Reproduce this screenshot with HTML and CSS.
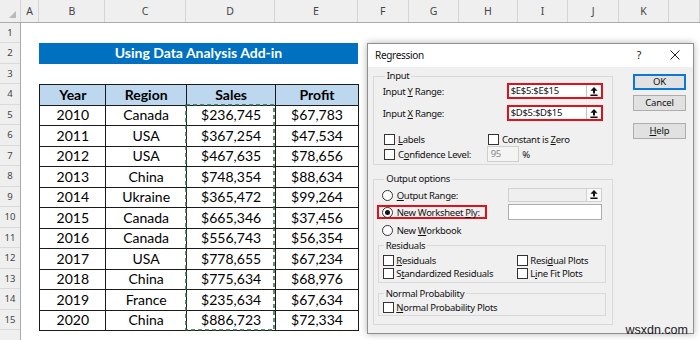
FILE: index.html
```html
<!DOCTYPE html>
<html lang="en">
<head>
  <meta charset="UTF-8">
  <title>Regression - Data Analysis Add-in</title>
  <link rel="stylesheet" href="styles.css">
</head>
<body>
  <div class="sheet">
    <div class="col-heads">
      <div class="corner"><span class="corner-mark"></span></div>
      <div class="ch">A</div>
      <div class="ch">B</div>
      <div class="ch">C</div>
      <div class="ch">D</div>
      <div class="ch">E</div>
      <div class="ch">F</div>
      <div class="ch">G</div>
      <div class="ch">H</div>
      <div class="ch">I</div>
      <div class="ch">J</div>
      <div class="ch">K</div>
      <div class="ch"></div>
    </div>

    <div class="sheet-body">
      <div class="row-heads">
        <div class="rh">1</div>
        <div class="rh">2</div>
        <div class="rh">3</div>
        <div class="rh">4</div>
        <div class="rh">5</div>
        <div class="rh">6</div>
        <div class="rh">7</div>
        <div class="rh">8</div>
        <div class="rh">9</div>
        <div class="rh">10</div>
        <div class="rh">11</div>
        <div class="rh">12</div>
        <div class="rh">13</div>
        <div class="rh">14</div>
        <div class="rh">15</div>
        <div class="rh"></div>
      </div>

      <div class="cells">
        <div class="title">Using Data Analysis Add-in</div>

        <div class="table-wrap">
          <table class="data">
            <colgroup>
              <col class="c-year">
              <col class="c-region">
              <col class="c-sales">
              <col class="c-profit">
            </colgroup>
            <tr class="head">
              <th>Year</th>
              <th>Region</th>
              <th>Sales</th>
              <th>Profit</th>
            </tr>
            <tr><td>2010</td><td>Canada</td><td>$236,745</td><td>$67,783</td></tr>
            <tr><td>2011</td><td>USA</td><td>$367,254</td><td>$47,534</td></tr>
            <tr><td>2012</td><td>USA</td><td>$467,635</td><td>$78,656</td></tr>
            <tr><td>2013</td><td>China</td><td>$748,354</td><td>$88,634</td></tr>
            <tr><td>2014</td><td>Ukraine</td><td>$365,472</td><td>$99,264</td></tr>
            <tr><td>2015</td><td>Canada</td><td>$665,346</td><td>$37,456</td></tr>
            <tr><td>2016</td><td>Canada</td><td>$556,743</td><td>$56,354</td></tr>
            <tr><td>2017</td><td>USA</td><td>$778,655</td><td>$67,234</td></tr>
            <tr><td>2018</td><td>China</td><td>$775,634</td><td>$68,976</td></tr>
            <tr><td>2019</td><td>France</td><td>$235,634</td><td>$67,634</td></tr>
            <tr><td>2020</td><td>China</td><td>$886,723</td><td>$72,334</td></tr>
          </table>

          <!-- copy marquee around D5:D15 -->
          <svg class="marquee" width="90" height="227" viewBox="0 0 90 227">
            <rect x="1" y="1" width="88" height="225" fill="none" stroke="#2a6b45" stroke-width="1.5" stroke-dasharray="4 3"/>
          </svg>
        </div>
      </div>
    </div>
  </div>

  <div class="dialog">
    <div class="dlg-title">
      <span class="dlg-name">Regression</span>
      <span class="dlg-help">?</span>
      <svg class="dlg-close" width="10" height="10" viewBox="0 0 10 10">
        <path d="M0.5 0.5 L9.5 9.5 M9.5 0.5 L0.5 9.5" stroke="#222" stroke-width="1" fill="none"/>
      </svg>
    </div>

    <div class="dlg-body">
      <div class="dlg-main">
        <fieldset class="group input">
          <legend>Input</legend>
          <div class="field-row">
            <span class="field-label">Input <u>Y</u> Range:</span>
            <span class="range hl">
              <span class="range-text">$E$5:$E$15</span>
              <span class="range-btn">
                <svg width="8" height="9" viewBox="0 0 8 9"><path d="M4 0 L7.6 3.8 H5 V6.6 H3 V3.8 H0.4 Z M0.4 7.6 H7.6 V9 H0.4 Z" fill="#111"/></svg>
              </span>
            </span>
          </div>
          <div class="field-row second">
            <span class="field-label">Input <u>X</u> Range:</span>
            <span class="range hl">
              <span class="range-text">$D$5:$D$15</span>
              <span class="range-btn">
                <svg width="8" height="9" viewBox="0 0 8 9"><path d="M4 0 L7.6 3.8 H5 V6.6 H3 V3.8 H0.4 Z M0.4 7.6 H7.6 V9 H0.4 Z" fill="#111"/></svg>
              </span>
            </span>
          </div>
          <div class="check-row labels">
            <span class="opt opt-left"><span class="box"></span><span><u>L</u>abels</span></span>
            <span class="opt"><span class="box"></span><span>Constant is <u>Z</u>ero</span></span>
          </div>
          <div class="check-row conf">
            <span class="opt opt-left"><span class="box"></span><span>C<u>o</u>nfidence Level:</span></span>
            <span class="num">95</span>
            <span class="pct">%</span>
          </div>
        </fieldset>

        <fieldset class="group output">
          <legend>Output options</legend>
          <div class="radio-row first">
            <span class="opt out-label"><span class="radio"></span><span><u>O</u>utput Range:</span></span>
            <span class="range off">
              <span class="range-text"></span>
              <span class="range-btn">
                <svg width="8" height="9" viewBox="0 0 8 9"><path d="M4 0 L7.6 3.8 H5 V6.6 H3 V3.8 H0.4 Z M0.4 7.6 H7.6 V9 H0.4 Z" fill="#111"/></svg>
              </span>
            </span>
          </div>
          <div class="radio-row ply">
            <span class="opt out-label hl-opt"><span class="radio on"></span><span>New Worksheet <u>P</u>ly:</span></span>
            <span class="text-box"></span>
          </div>
          <div class="radio-row book">
            <span class="opt"><span class="radio"></span><span>New <u>W</u>orkbook</span></span>
          </div>

          <fieldset class="group sub resid">
            <legend>Residuals</legend>
            <div class="sub-row">
              <span class="opt res-left"><span class="box"></span><span><u>R</u>esiduals</span></span>
              <span class="opt"><span class="box"></span><span>Resi<u>d</u>ual Plots</span></span>
            </div>
            <div class="sub-row">
              <span class="opt res-left"><span class="box"></span><span>S<u>t</u>andardized Residuals</span></span>
              <span class="opt"><span class="box"></span><span>L<u>i</u>ne Fit Plots</span></span>
            </div>
          </fieldset>

          <fieldset class="group sub normal">
            <legend>Normal Probability</legend>
            <div class="sub-row">
              <span class="opt"><span class="box"></span><span><u>N</u>ormal Probability Plots</span></span>
            </div>
          </fieldset>
        </fieldset>
      </div>

      <div class="dlg-side">
        <button class="btn default">OK</button>
        <button class="btn cancel">Cancel</button>
        <button class="btn help"><u>H</u>elp</button>
      </div>
    </div>
  </div>

  <div class="watermark">wsxdn.com</div>
</body>
</html>
```

FILE: styles.css
```css
* {
  box-sizing: border-box;
}
body {
  margin: 0;
  width: 700px;
  height: 340px;
  overflow: hidden;
  position: relative;
  background: #fff;
  font-family: Lato, "Liberation Sans", sans-serif;
}

/* sheet headers */
.col-heads {
  display: grid;
  grid-template-columns: 21px 18.3px 66px 80.7px 89.3px 82.4px 51px 50.6px 58.4px 50.6px 50.7px 50.3px 1fr;
  height: 22.5px;
  background: #efefef;
  border-bottom: 1px solid #ababab;
}
.corner {
  display: flex;
  align-items: flex-end;
  justify-content: flex-end;
  padding: 0 4px 4px 0;
  border-right: 1px solid #d5d5d5;
}
.corner-mark {
  width: 0;
  height: 0;
  border-left: 7px solid transparent;
  border-bottom: 7px solid #b9b9b9;
}
.ch {
  display: flex;
  align-items: center;
  justify-content: center;
  border-right: 1px solid #d5d5d5;
  font-family: "Noto Sans", sans-serif;
  font-size: 10.5px;
  color: #444;
}
.sheet-body {
  display: flex;
}
.row-heads {
  width: 21px;
  flex: none;
  background: #efefef;
  border-right: 1px solid #ababab;
}
.rh {
  height: 20.5px;
  display: flex;
  align-items: center;
  justify-content: center;
  border-bottom: 1px solid #dadada;
  font-family: "Noto Sans", sans-serif;
  font-size: 9.5px;
  color: #444;
}
.cells {
  flex: 1;
  padding-top: 20.5px;
}

/* sheet content */
.title {
  margin-left: 18.3px;
  width: 318.4px;
  height: 20.6px;
  line-height: 20.6px;
  background: #0070c0;
  color: #fff;
  font-weight: bold;
  font-size: 14px;
  text-align: center;
}
.table-wrap {
  position: relative;
  margin: 20.5px 0 0 18.3px;
  width: 318.4px;
}
.data {
  border-collapse: collapse;
  table-layout: fixed;
  width: 318.4px;
}
.c-year { width: 66px; }
.c-region { width: 80.7px; }
.c-sales { width: 89.3px; }
.c-profit { width: 82.4px; }
.data tr {
  height: 20.5px;
}
.data td,
.data th {
  border: 1px solid #1a1a1a;
  padding: 0;
  text-align: center;
  font-size: 14px;
  line-height: 1;
  color: #000;
}
.data th {
  background: #bdd7ee;
  font-weight: bold;
}
.marquee {
  position: absolute;
  left: 146.2px;
  top: 20.2px;
}

/* dialog */
.dialog {
  position: absolute;
  left: 367px;
  top: 42.5px;
  width: 327px;
  height: 291px;
  display: flex;
  flex-direction: column;
  background: #f0f0f0;
  border: 1px solid #8f8f8f;
  box-shadow: 0 0 7px rgba(0,0,0,0.3);
  font-family: "Noto Sans", sans-serif;
  font-size: 9.5px;
  letter-spacing: -0.3px;
  color: #111;
}
.dlg-title {
  height: 23.5px;
  flex: none;
  display: flex;
  align-items: center;
  padding-left: 7px;
  background: #fff;
}
.dlg-name {
  flex: 1;
  font-size: 10px;
}
.dlg-help {
  margin-right: 29px;
  font-size: 10.5px;
}
.dlg-close {
  margin-right: 13px;
}
.dlg-body {
  flex: 1;
  display: flex;
  padding: 2px 0 0 5.3px;
}
.dlg-main {
  width: 239.3px;
}
.dlg-side {
  width: 52.4px;
  margin-left: 20.7px;
  padding-top: 5.3px;
  display: flex;
  flex-direction: column;
}

.group {
  margin: 0;
  padding: 0 0 2px 8.4px;
  min-width: 0;
  border: 1px solid #d9d9d9;
}
.group legend {
  margin-left: 2px;
  padding: 0 2px;
  font-size: 9.5px;
  line-height: 14px;
}

.field-row {
  height: 16px;
  display: flex;
  align-items: center;
}
.field-row.second {
  margin-top: 6px;
}
.field-label {
  width: 124px;
}
.range {
  width: 96px;
  height: 16px;
  display: flex;
  background: #fff;
  border: 1px solid #adadad;
}
.range.hl {
  border: 2px solid #e3101a;
}
.range-text {
  flex: 1;
  padding-left: 2px;
  line-height: 12px;
}
.range-btn {
  width: 15px;
  display: flex;
  align-items: center;
  justify-content: center;
  border-left: 1px solid #c4c4c4;
  background: #fff;
}
.range.off {
  width: 94px;
  height: 13.4px;
  background: #efefef;
  border-color: #d0d0d0;
}
.range.off .range-btn {
  background: #f8f8f8;
  border-left-color: #d0d0d0;
}

.check-row {
  display: flex;
  align-items: center;
}
.check-row.labels {
  margin-top: 11px;
  height: 14px;
}
.check-row.conf {
  height: 16px;
}
.opt {
  display: flex;
  align-items: center;
  white-space: nowrap;
}
.opt-left {
  width: 104px;
}
.box {
  width: 11px;
  height: 11px;
  margin: 0 3px 0 1.3px;
  flex: none;
  background: #fff;
  border: 1px solid #333;
}
.num {
  width: 32.6px;
  height: 16px;
  padding-left: 3px;
  line-height: 14px;
  color: #8a8a8a;
  background: #f4f4f4;
  border: 1px solid #cfcfcf;
}
.pct {
  margin-left: 3px;
}

.group.output {
  margin-top: 7px;
  padding: 0 0 7.5px 8px;
}
.radio-row {
  display: flex;
  align-items: center;
}
.radio-row.first {
  margin-top: 2px;
  height: 14px;
}
.radio-row.ply {
  margin-top: 2px;
  height: 16px;
}
.radio-row.book {
  margin-top: 3px;
  height: 14px;
}
.out-label {
  width: 126px;
}
.radio {
  width: 11px;
  height: 11px;
  margin-right: 3.4px;
  flex: none;
  display: flex;
  align-items: center;
  justify-content: center;
  background: #fff;
  border: 1px solid #333;
  border-radius: 50%;
}
.radio.on::after {
  content: "";
  width: 5px;
  height: 5px;
  border-radius: 50%;
  background: #111;
}
.hl-opt {
  width: 110px;
  height: 14.5px;
  margin-left: -5px;
  margin-right: 21px;
  padding-left: 3px;
  border: 2px solid #e3101a;
}
.text-box {
  width: 94px;
  height: 15.7px;
  background: #fff;
  border: 1px solid #adadad;
}

.group.sub {
  margin: 1.5px 5.6px 0 -4px;
  padding: 1px 0 2.5px 3.4px;
}
.group.sub legend {
  margin-left: 1px;
}
.group.normal {
  margin-top: 3.5px;
  padding: 0 0 1.5px 3.4px;
}
.sub-row {
  height: 13px;
  display: flex;
  align-items: center;
}
.sub-row .box {
  margin-left: 0;
  margin-right: 2.6px;
}
.res-left {
  width: 134px;
}

.btn {
  height: 15.7px;
  padding: 0;
  font-family: "Noto Sans", sans-serif;
  font-size: 9.5px;
  letter-spacing: -0.2px;
  line-height: 12px;
  color: #111;
  background: #e1e1e1;
  border: 1px solid #adadad;
}
.btn.default {
  border: 2px solid #0a78d4;
}
.btn.cancel {
  margin-top: 5px;
}
.btn.help {
  margin-top: 12.6px;
}

.watermark {
  position: absolute;
  right: 12px;
  bottom: 3px;
  font-family: "Liberation Sans", sans-serif;
  font-size: 12.5px;
  line-height: 14px;
  color: #1a1a1a;
}
```
